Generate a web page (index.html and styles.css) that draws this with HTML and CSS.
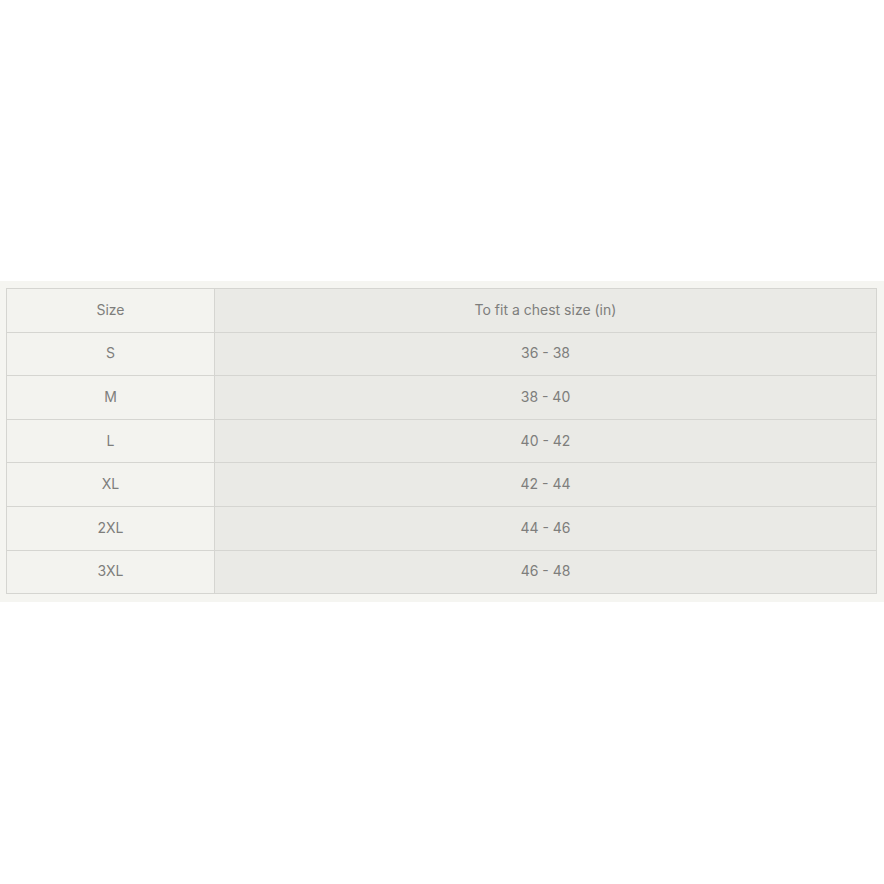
FILE: index.html
```html
<!DOCTYPE html>
<html>
<head>
<meta charset="utf-8">
<link rel="stylesheet" href="styles.css">
</head>
<body>
<div class="page">
  <div class="band">
    <table class="sizes">
      <tr><td class="c1">Size</td><td class="c2">To fit a chest size (in)</td></tr>
      <tr><td class="c1">S</td><td class="c2">36 - 38</td></tr>
      <tr><td class="c1">M</td><td class="c2">38 - 40</td></tr>
      <tr><td class="c1">L</td><td class="c2">40 - 42</td></tr>
      <tr><td class="c1">XL</td><td class="c2">42 - 44</td></tr>
      <tr><td class="c1">2XL</td><td class="c2">44 - 46</td></tr>
      <tr><td class="c1">3XL</td><td class="c2">46 - 48</td></tr>
    </table>
  </div>
</div>
</body>
</html>
```
FILE: styles.css
```css
html, body { margin: 0; padding: 0; background: #ffffff; }
.page { padding-top: 281px; height: 603px; }
.band {
  background: #f5f5f1;
  padding: 7px 7px 8px 6px;
}
.sizes {
  width: 871px;
  border-collapse: collapse;
  font-family: Inter, "Liberation Sans", sans-serif;
  font-size: 14px;
  color: #7e7e7c;
}
.sizes td {
  box-sizing: border-box;
  border: 1px solid #d5d5d1;
  height: 43.6px;
  padding: 0 0 2px 0;
  text-align: center;
  vertical-align: middle;
}
.c1 { width: 208px; background: #f3f3ef; }
.c2 { background: #eaeae6; }
```
